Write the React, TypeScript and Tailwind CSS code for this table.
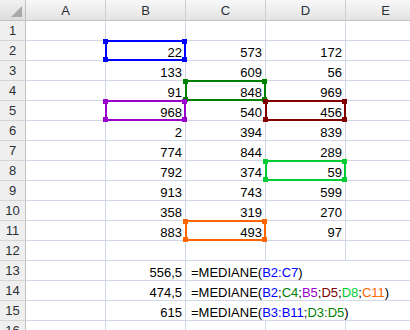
import React from 'react';

const cols = ['A', 'B', 'C', 'D', 'E'];

const values: Record<number, (string | null)[]> = {
  2: [null, '22', '573', '172'],
  3: [null, '133', '609', '56'],
  4: [null, '91', '848', '969'],
  5: [null, '968', '540', '456'],
  6: [null, '2', '394', '839'],
  7: [null, '774', '844', '289'],
  8: [null, '792', '374', '59'],
  9: [null, '913', '743', '599'],
  10: [null, '358', '319', '270'],
  11: [null, '883', '493', '97'],
  13: [null, '556,5'],
  14: [null, '474,5'],
  15: [null, '615'],
};

type Part = [string, string?];

const formulas: Record<number, Part[]> = {
  13: [['=MEDIANE('], ['B2:C7', '#0000ff'], [')']],
  14: [
    ['=MEDIANE('],
    ['B2', '#0000ff'],
    [';'],
    ['C4', '#008000'],
    [';'],
    ['B5', '#9900cc'],
    [';'],
    ['D5', '#800000'],
    [';'],
    ['D8', '#00cc33'],
    [';'],
    ['C11', '#ff6600'],
    [')'],
  ],
  15: [['=MEDIANE('], ['B3:B11', '#0000ff'], [';'], ['D3:D5', '#008000'], [')']],
};

const selections = [
  { col: 1, row: 2, color: '#0000ff' },
  { col: 2, row: 4, color: '#008000' },
  { col: 1, row: 5, color: '#9900cc' },
  { col: 3, row: 5, color: '#800000' },
  { col: 3, row: 8, color: '#00cc33' },
  { col: 2, row: 11, color: '#ff6600' },
];

const Selection = ({ col, row, color }: { col: number; row: number; color: string }) => {
  const x = 25 + col * 80;
  const y = row * 20;
  const w = 81;
  const h = 21;
  const corners = [
    [x - 2, y - 1],
    [x + w - 4, y - 1],
    [x - 2, y + h - 4],
    [x + w - 4, y + h - 4],
  ];
  return (
    <>
      <div
        className="absolute border-2"
        style={{ left: x, top: y, width: w, height: h, borderColor: color }}
      />
      {corners.map(([cx, cy], i) => (
        <div
          key={i}
          className="absolute h-[5px] w-[5px]"
          style={{ left: cx, top: cy, backgroundColor: color }}
        />
      ))}
    </>
  );
};

const Row = ({ n }: { n: number }) => {
  const vals = values[n] ?? [];
  const formula = formulas[n];
  return (
    <div className="flex h-[20px]">
      <div className="flex w-[26px] shrink-0 items-center justify-center border-b border-r border-b-[#d5d5d5] border-r-[#c2c2c2] bg-[#efefef] text-[#2b2f36]">
        {n}
      </div>
      {cols.map((c, i) => {
        const overflow = formula && i >= 2;
        return (
          <div
            key={c}
            className={`relative flex w-[80px] shrink-0 items-end justify-end border-b border-b-[#d0d7e5] pb-[1px] pr-[3px] ${
              overflow ? 'border-r border-r-transparent' : 'border-r border-r-[#d0d7e5]'
            }`}
          >
            {vals[i] ?? ''}
            {formula && i === 2 && (
              <span className="absolute bottom-[1px] left-[5px] whitespace-nowrap">
                {formula.map(([t, color], k) =>
                  color ? (
                    <span key={k} style={{ color }}>
                      {t}
                    </span>
                  ) : (
                    <span key={k}>{t}</span>
                  ),
                )}
              </span>
            )}
          </div>
        );
      })}
    </div>
  );
};

const App = () => {
  const rows = Array.from({ length: 16 }, (_, i) => i + 1);
  return (
    <div className="relative h-[330px] w-[410px] overflow-hidden bg-white font-['Liberation_Sans',Arial,sans-serif] text-[13px] leading-none text-black">
      <div className="flex h-[21px]">
        <div className="relative w-[26px] shrink-0 border-b border-r border-[#c2c2c2] bg-gradient-to-b from-[#f2f2f2] to-[#dcdcdc]">
          <div className="absolute bottom-[3px] right-[3px] h-0 w-0 border-b-[11px] border-l-[11px] border-b-[#a9a9a9] border-l-transparent" />
        </div>
        {cols.map((c) => (
          <div
            key={c}
            className="flex w-[80px] shrink-0 items-center justify-center border-b border-r border-b-[#c2c2c2] border-r-[#cfcfcf] bg-gradient-to-b from-[#f8f8f8] to-[#e3e3e3] text-[#2b2f36]"
          >
            {c}
          </div>
        ))}
      </div>
      {rows.map((n) => (
        <Row key={n} n={n} />
      ))}
      {selections.map((s) => (
        <Selection key={`${s.col}-${s.row}`} {...s} />
      ))}
    </div>
  );
};

export default App;
